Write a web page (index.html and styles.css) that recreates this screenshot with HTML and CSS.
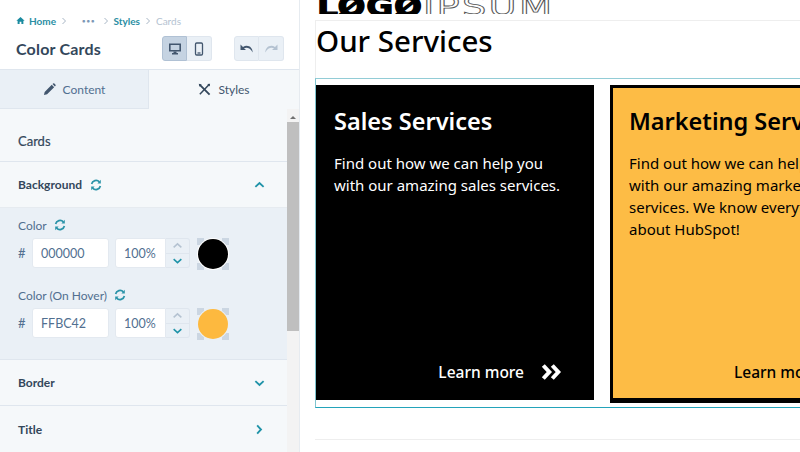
FILE: index.html
```html
<!DOCTYPE html>
<html lang="en">
<head>
    <meta charset="UTF-8">
    <meta name="viewport" content="width=device-width, initial-scale=1.0">
    <title>Color Cards</title>
    <link rel="stylesheet" href="styles.css">
</head>
<body>
    <div class="app">
        <aside class="sidebar">
            <div class="head">
                <div class="crumbs">
                    <svg class="home" viewBox="0 0 10 10"><path d="M5 1 L9.6 5.2 H8.2 V9 H6 V6.4 H4 V9 H1.8 V5.2 H.4 Z" fill="#1b8ba0"/></svg>
                    <a class="crumb-home">Home</a>
                    <svg class="sep first" viewBox="0 0 6 8"><path d="M1.5 1 L4.5 4 L1.5 7"/></svg>
                    <span class="dots">•••</span>
                    <svg class="sep second" viewBox="0 0 6 8"><path d="M1.5 1 L4.5 4 L1.5 7"/></svg>
                    <a>Styles</a>
                    <svg class="sep third" viewBox="0 0 6 8"><path d="M1.5 1 L4.5 4 L1.5 7"/></svg>
                    <span class="crumb-off">Cards</span>
                </div>
                <div class="title-row">
                    <h1>Color Cards</h1>
                    <div class="btn-group">
                        <button class="tool active"><svg viewBox="0 0 14 14"><path d="M1 1.5 H13 V9.5 H1 Z M2.6 3 V8 H11.4 V3 Z" fill="#42566e" fill-rule="evenodd"/><path d="M5.5 9.5 H8.5 V11 H10 V12.5 H4 V11 H5.5 Z" fill="#42566e"/></svg></button>
                        <button class="tool"><svg viewBox="0 0 14 14"><rect x="3.5" y="1" width="7" height="12" rx="1.2" fill="none" stroke="#42566e" stroke-width="1.3"/><path d="M5.5 11 H8.5" stroke="#42566e" stroke-width="1.3"/></svg></button>
                    </div>
                    <div class="btn-group undo">
                        <button class="tool"><svg viewBox="0 0 14 14"><path d="M.5 2.5 V8 H6 L4 6.2 C6.6 4.9 10.4 5.8 12.6 10.4 C13 5.2 7.6 1.8 3 4.9 Z" fill="#42566e"/></svg></button>
                        <button class="tool"><svg viewBox="0 0 14 14"><path d="M13.5 2.5 V8 H8 L10 6.2 C7.4 4.9 3.6 5.8 1.4 10.4 C1 5.2 6.4 1.8 11 4.9 Z" fill="#b4c2d1"/></svg></button>
                    </div>
                </div>
            </div>

            <div class="tabs">
                <div class="tab tab-off">
                    <svg viewBox="0 0 14 14"><path d="M1 13 L1.8 9.6 L9.4 2 L12 4.6 L4.4 12.2 Z M10.2 1.2 L11 .5 C11.4 .2 11.8 .2 12.2 .5 L13.5 1.8 C13.8 2.2 13.8 2.6 13.5 3 L12.8 3.8 Z" fill="#42566e"/></svg>
                    Content
                </div>
                <div class="tab">
                    <svg viewBox="0 0 14 14"><path d="M2 2 L12.5 12.5" stroke="#33475b" stroke-width="2"/><path d="M12 1.5 L2 12" stroke="#33475b" stroke-width="1.6"/><path d="M.8 .8 L4 1.6 L1.6 4 Z M10 1 L13 .8 L12.6 3.8 Z" fill="#33475b"/></svg>
                    Styles
                </div>
            </div>

            <div class="panel">
                <div class="panel-body">
                    <div class="row row-cards">Cards</div>
                    <div class="row row-acc">
                        <span class="acc-label">Background
                            <svg class="sync" viewBox="0 0 12 12"><path d="M1.6 5 A4.6 4.6 0 0 1 9.4 2.8 M10.4 7 A4.6 4.6 0 0 1 2.6 9.2" fill="none" stroke="#2a93a8" stroke-width="1.7"/><path d="M10.8 .8 V4.4 H7.4 Z M1.2 11.2 V7.6 H4.6 Z" fill="#2a93a8"/></svg>
                        </span>
                        <svg class="chev" viewBox="0 0 12 8"><path d="M1.5 6 L6 1.8 L10.5 6"/></svg>
                    </div>
                    <div class="expanded">
                        <div class="field">
                            <div class="field-label">Color
                                <svg class="sync" viewBox="0 0 12 12"><path d="M1.6 5 A4.6 4.6 0 0 1 9.4 2.8 M10.4 7 A4.6 4.6 0 0 1 2.6 9.2" fill="none" stroke="#2a93a8" stroke-width="1.7"/><path d="M10.8 .8 V4.4 H7.4 Z M1.2 11.2 V7.6 H4.6 Z" fill="#2a93a8"/></svg>
                            </div>
                            <div class="color-row">
                                <span class="hash">#</span>
                                <div class="input hex">000000</div>
                                <div class="input pct">100%</div>
                                <div class="stepper">
                                    <svg class="step-off" viewBox="0 0 10 7"><path d="M1.5 5 L5 1.8 L8.5 5"/></svg>
                                    <svg class="step-on" viewBox="0 0 10 7"><path d="M1.5 2 L5 5.2 L8.5 2"/></svg>
                                </div>
                                <div class="swatch"><span class="dot dot-black"></span></div>
                            </div>
                        </div>
                        <div class="field field-two">
                            <div class="field-label">Color (On Hover)
                                <svg class="sync" viewBox="0 0 12 12"><path d="M1.6 5 A4.6 4.6 0 0 1 9.4 2.8 M10.4 7 A4.6 4.6 0 0 1 2.6 9.2" fill="none" stroke="#2a93a8" stroke-width="1.7"/><path d="M10.8 .8 V4.4 H7.4 Z M1.2 11.2 V7.6 H4.6 Z" fill="#2a93a8"/></svg>
                            </div>
                            <div class="color-row">
                                <span class="hash">#</span>
                                <div class="input hex">FFBC42</div>
                                <div class="input pct">100%</div>
                                <div class="stepper">
                                    <svg class="step-off" viewBox="0 0 10 7"><path d="M1.5 5 L5 1.8 L8.5 5"/></svg>
                                    <svg class="step-on" viewBox="0 0 10 7"><path d="M1.5 2 L5 5.2 L8.5 2"/></svg>
                                </div>
                                <div class="swatch"><span class="dot dot-yellow"></span></div>
                            </div>
                        </div>
                    </div>
                    <div class="row row-acc">
                        <span class="acc-label">Border</span>
                        <svg class="chev" viewBox="0 0 12 8"><path d="M1.5 2 L6 6.2 L10.5 2"/></svg>
                    </div>
                    <div class="row row-acc row-last">
                        <span class="acc-label">Title</span>
                        <svg class="chev chev-right" viewBox="0 0 8 12"><path d="M2 1.5 L6.2 6 L2 10.5"/></svg>
                    </div>
                </div>
                <div class="scrollbar">
                    <span class="arrow"></span>
                    <span class="thumb"></span>
                </div>
            </div>
        </aside>

        <main class="preview">
            <div class="logo"><span class="logo-bold">LØGØ</span><span class="logo-line">IPSUM</span></div>
            <div class="content">
                <h2>Our Services</h2>
                <div class="cards">
                    <div class="card card-black">
                        <h3>Sales Services</h3>
                        <p>Find out how we can help you with our amazing sales services.</p>
                        <div class="learn">Learn more
                            <svg viewBox="0 0 20 16"><path d="M1.8 1.5 L7.8 8 L1.8 14.5 M10.8 1.5 L16.8 8 L10.8 14.5" fill="none" stroke="#fff" stroke-width="4"/></svg>
                        </div>
                    </div>
                    <div class="card card-yellow">
                        <h3>Marketing Services</h3>
                        <p>Find out how we can help you with our amazing marketing services. We know everything about HubSpot!</p>
                        <div class="learn">Learn more</div>
                    </div>
                </div>
            </div>
        </main>
    </div>
</body>
</html>
```
FILE: styles.css
```css
* {
    box-sizing: border-box;
}

html, body {
    margin: 0;
    height: 452px;
    overflow: hidden;
}

body {
    font-family: "Lato", sans-serif;
    color: #33475b;
    background-color: #fff;
}

.app {
    display: flex;
    height: 452px;
}

/* Left editor panel */
.sidebar {
    width: 300px;
    flex-shrink: 0;
    display: flex;
    flex-direction: column;
    background-color: #f5f8fa;
    border-right: 1px solid #e6ebf0;
}

.head {
    height: 70px;
    padding: 14px 15px 0 16px;
    background-color: #fff;
    border-bottom: 1px solid #dfe6ee;
}

.crumbs {
    display: flex;
    align-items: center;
    height: 13px;
    font-size: 10px;
    font-weight: 700;
    color: #2a8ea3;
}

.home {
    width: 9px;
    height: 9px;
    margin-right: 4px;
}

.sep {
    width: 6px;
    height: 8px;
    fill: none;
    stroke: #a8b6c5;
    stroke-width: 1;
}

.sep.first {
    margin: 0 15px 0 5px;
}

.sep.second {
    margin: 0 4px 0 8px;
}

.sep.third {
    margin: 0 5px;
}

.dots {
    font-size: 6px;
    letter-spacing: 1px;
    color: #7c98b6;
}

.crumb-off {
    font-weight: 400;
    color: #b4c2d1;
}

.title-row {
    display: flex;
    align-items: center;
    margin-top: 9px;
}

h1 {
    width: 147px;
    margin: 0;
    font-size: 16px;
    font-weight: 700;
    letter-spacing: 0.2px;
    color: #33475b;
}

.btn-group {
    display: flex;
}

.btn-group.undo {
    margin-left: 22px;
}

.tool {
    width: 25px;
    height: 25px;
    padding: 0;
    display: flex;
    align-items: center;
    justify-content: center;
    background-color: #eaf0f6;
    border: 1px solid #dfe6ee;
}

.tool + .tool {
    border-left: none;
}

.tool:first-child {
    border-radius: 3px 0 0 3px;
}

.tool:last-child {
    border-radius: 0 3px 3px 0;
}

.tool.active {
    background-color: #c5d3e2;
    border-color: #b0c1d4;
}

.tool svg {
    width: 14px;
    height: 14px;
}

.tabs {
    display: flex;
    height: 39px;
    flex-shrink: 0;
}

.tab {
    width: 150px;
    display: flex;
    align-items: center;
    justify-content: center;
    gap: 7px;
    font-size: 12px;
    color: #42566e;
}

.tab svg {
    width: 13px;
    height: 13px;
}

.tab-off {
    width: 149px;
    background-color: #eaf0f6;
    border-right: 1px solid #dfe6ee;
    border-bottom: 1px solid #dfe6ee;
    color: #516f90;
}

.panel {
    flex: 1;
    display: flex;
    min-height: 0;
}

.panel-body {
    width: 287px;
    flex-shrink: 0;
}

.row {
    display: flex;
    align-items: center;
    padding: 0 22px 0 18px;
    font-size: 12px;
    font-weight: 700;
    color: #33475b;
    border-bottom: 1px solid #dfe6ee;
}

.row-cards {
    height: 53px;
    padding-top: 11px;
    font-size: 13px;
    font-weight: 400;
    -webkit-text-stroke: 0.2px #33475b;
}

.row-acc {
    height: 46px;
    justify-content: space-between;
}

.row-acc:nth-child(2) {
    border-bottom: 1px solid #e6ebf0;
}

.row-last {
    border-bottom: none;
}

.acc-label {
    display: flex;
    align-items: center;
    gap: 8px;
}

.sync {
    width: 12px;
    height: 12px;
}

.chev {
    width: 11px;
    height: 8px;
    fill: none;
    stroke: #1f93a8;
    stroke-width: 2;
}

.chev-right {
    width: 8px;
    height: 11px;
    margin-right: 2px;
}

.expanded {
    height: 152px;
    padding: 9px 0 0 18px;
    background-color: #eaf0f6;
    border-bottom: 1px solid #dfe6ee;
}

.field-two {
    margin-top: 17px;
}

.field-label {
    display: flex;
    align-items: center;
    gap: 7px;
    height: 16px;
    font-size: 12px;
    color: #516f90;
}

.color-row {
    display: flex;
    align-items: flex-start;
    margin-top: 5px;
    height: 32px;
}

.hash {
    width: 14px;
    font-size: 13px;
    line-height: 30px;
    color: #516f90;
}

.input {
    height: 30px;
    line-height: 30px;
    font-size: 12.5px;
    color: #516f90;
    background-color: #fff;
    border: 1px solid #e3e9f0;
    border-radius: 3px;
}

.hex {
    width: 77px;
    padding-left: 8px;
}

.pct {
    width: 51px;
    margin-left: 6px;
    padding-left: 8px;
    border-radius: 3px 0 0 3px;
}

.stepper {
    width: 24px;
    height: 30px;
    display: flex;
    flex-direction: column;
    background-color: #eaf0f6;
    border: 1px solid #dfe6ee;
    border-left: none;
    border-radius: 0 3px 3px 0;
}

.stepper svg {
    flex: 1;
    min-height: 0;
    width: 100%;
    padding: 2px 6px;
    fill: none;
    stroke-width: 1.4;
}

.step-off {
    stroke: #b4c2d1;
    border-bottom: 1px solid #dfe6ee;
}

.step-on {
    stroke: #1f93a8;
}

/* checker corners peeking out behind the round colour dot */
.swatch {
    width: 32px;
    height: 32px;
    margin-left: 7px;
    padding: 1px;
    background-color: #cbd6e2;
    background-image: linear-gradient(#eaf0f6, #eaf0f6), linear-gradient(#eaf0f6, #eaf0f6);
    background-size: 100% 18px, 18px 100%;
    background-position: 0 7px, 7px 0;
    background-repeat: no-repeat;
}

.dot {
    display: block;
    width: 30px;
    height: 30px;
    border-radius: 50%;
}

.dot-black {
    background-color: #000;
    box-shadow: 0 0 0 1px #fff;
}

.dot-yellow {
    background-color: #fdb93f;
    box-shadow: 0 0 0 1px #eaf0f6;
}

.scrollbar {
    width: 12px;
    background-color: #f3f3f3;
    display: flex;
    flex-direction: column;
    align-items: stretch;
}

.arrow {
    width: 0;
    height: 0;
    margin: 7px auto 3px;
    border-left: 3px solid transparent;
    border-right: 3px solid transparent;
    border-bottom: 3px solid #707070;
}

.thumb {
    height: 209px;
    background-color: #bfbfbf;
}

/* Page preview on the right */
.preview {
    flex: 1;
    min-width: 0;
    overflow: hidden;
    display: flex;
    flex-direction: column;
    background-color: #fff;
    font-family: "Noto Sans", sans-serif;
    color: #000;
}

/* logo is a wide display face, so stretch the nearest installed one */
.logo {
    height: 14px;
    flex-shrink: 0;
    overflow: hidden;
    display: flex;
    padding-left: 17px;
    white-space: nowrap;
    font-family: "DejaVu Sans", sans-serif;
    font-size: 27px;
    line-height: 14px;
    font-weight: 700;
}

.logo-bold {
    width: 106px;
    transform: scaleX(1.22);
    transform-origin: left;
    letter-spacing: 0.6px;
    -webkit-text-stroke: 1.2px #000;
}

.logo-line {
    transform: scaleX(1.42);
    transform-origin: left;
    color: #fff;
    letter-spacing: 1.6px;
    font-weight: 400;
    -webkit-text-stroke: 0.8px #555;
}

.content {
    margin-left: 15px;
    height: 420px;
    margin-top: 6px;
    flex-shrink: 0;
    border-top: 1px solid #eee;
    border-bottom: 1px solid #eee;
}

h2 {
    margin: 0;
    height: 57px;
    padding-left: 0;
    border-left: 1px solid #eee;
    font-size: 29.5px;
    line-height: 40px;
    font-weight: 500;
}

.cards {
    display: flex;
    gap: 16px;
    height: 330px;
    padding: 6px 0;
    border-top: 1px solid #92ccd6;
    border-bottom: 1px solid #23a3ba;
    border-left: 1px solid #7fc4cf;
}

.card {
    flex-shrink: 0;
    height: 315px;
    display: flex;
    flex-direction: column;
    padding: 21px 18px 17px;
}

.card h3 {
    margin: 0;
    font-size: 23.5px;
    line-height: 30px;
    font-weight: 600;
    white-space: nowrap;
}

.card p {
    width: 232px;
    margin: 16px 0 0;
    font-size: 15px;
    line-height: 22px;
}

.learn {
    margin-top: auto;
    display: flex;
    align-items: center;
    justify-content: flex-end;
    gap: 17px;
    font-size: 15.5px;
    font-weight: 500;
    line-height: 22px;
    white-space: nowrap;
}

.learn svg {
    width: 21px;
    height: 16px;
}

.card-black {
    width: 278px;
    background-color: #000;
    color: #fff;
    padding-right: 32px;
}

.card-yellow {
    width: 300px;
    height: 318px;
    background-color: #fdbc45;
    border: 3px solid #000;
    border-width: 3px 3px 5px 3px;
    padding: 18px 16px 15px;
}

.card-yellow .learn {
    justify-content: flex-start;
    margin-left: 105px;
}
```
